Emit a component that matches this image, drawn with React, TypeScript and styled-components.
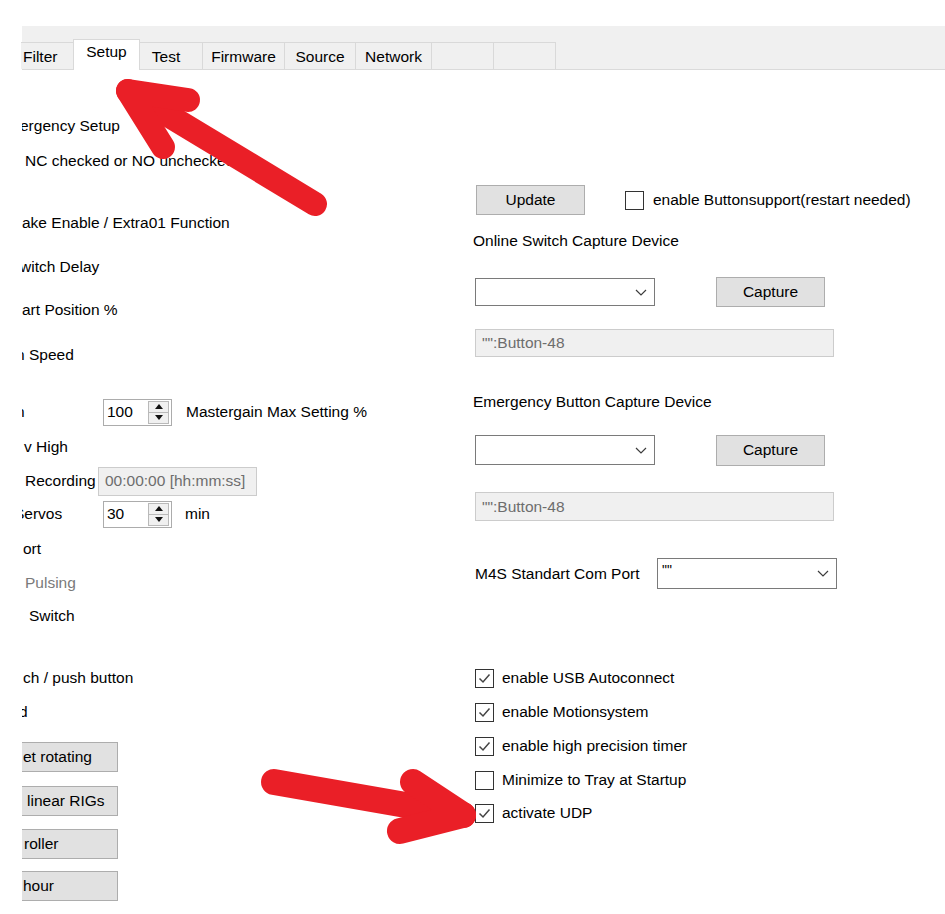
import styled, { createGlobalStyle } from 'styled-components';

const GlobalStyle = createGlobalStyle`
  html, body {
    margin: 0;
    padding: 0;
    background: #fff;
  }
  body {
    font-family: "Liberation Sans", Arial, sans-serif;
    font-size: 15.5px;
    color: #000;
  }
`;

// frame
const Page = styled.div`
  position: relative;
  width: 945px;
  height: 914px;
  overflow: hidden;
  padding-top: 26px;
  box-sizing: border-box;
  background: #fff;
`;

const TabStrip = styled.div`
  margin-left: 22px;
  height: 44px;
  box-sizing: border-box;
  background: #f0f0f0;
  border-bottom: 1px solid #dadada;
  display: flex;
  align-items: flex-end;
`;

const Tab = styled.div<{ $w: number; $active?: boolean; $first?: boolean; $dx?: number }>`
  width: ${(p) => p.$w}px;
  height: ${(p) => (p.$active ? 31 : 27)}px;
  margin-bottom: ${(p) => (p.$active ? -1 : 0)}px;
  box-sizing: border-box;
  border: 1px solid #d9d9d9;
  border-bottom: none;
  border-left: ${(p) => (p.$first ? 'none' : '1px solid #d9d9d9')};
  margin-left: -1px;
  background: ${(p) => (p.$active ? '#fff' : '#f0f0f0')};
  display: flex;
  align-items: center;
  justify-content: ${(p) => (p.$first ? 'flex-start' : 'center')};
  padding: ${(p) => (p.$active ? '0 0 6px' : '2px 0 0')};
  padding-left: ${(p) => (p.$first ? 2 : 0)}px;
  padding-right: ${(p) => p.$dx ?? 0}px;
  position: relative;
  z-index: ${(p) => (p.$active ? 1 : 0)};
`;

const Body = styled.div`
  display: grid;
  grid-template-columns: 451px 1fr;
  margin-left: 22px;
`;

const Column = styled.div<{ $clip?: boolean }>`
  display: flex;
  flex-direction: column;
  overflow: ${(p) => (p.$clip ? 'hidden' : 'visible')};
`;

const Row = styled.div<{ $mt: number; $h?: number }>`
  display: flex;
  align-items: center;
  margin-top: ${(p) => p.$mt}px;
  height: ${(p) => p.$h ?? 30}px;
  white-space: nowrap;
`;

const Label = styled.span<{ $ml?: number; $w?: number; $disabled?: boolean }>`
  margin-left: ${(p) => p.$ml ?? 0}px;
  ${(p) => (p.$w ? `width: ${p.$w}px; flex: none;` : '')}
  color: ${(p) => (p.$disabled ? '#7a7a7a' : '#000')};
  white-space: nowrap;
`;

// controls
const Button = styled.div<{ $w: number; $h?: number; $ml?: number }>`
  width: ${(p) => p.$w}px;
  height: ${(p) => p.$h ?? 30}px;
  margin-left: ${(p) => p.$ml ?? 0}px;
  box-sizing: border-box;
  background: #e1e1e1;
  border: 1px solid #adadad;
  display: flex;
  align-items: center;
  justify-content: center;
  flex: none;
`;

const CutButton = styled.div<{ $pad: number }>`
  width: 96px;
  height: 30px;
  box-sizing: border-box;
  background: #e1e1e1;
  border: 1px solid #adadad;
  border-left: none;
  display: flex;
  align-items: center;
  padding-left: ${(p) => p.$pad}px;
  white-space: nowrap;
  overflow: hidden;
`;

const TextBox = styled.div<{ $w: number; $h?: number; $ml?: number }>`
  width: ${(p) => p.$w}px;
  height: ${(p) => p.$h ?? 28}px;
  margin-left: ${(p) => p.$ml ?? 0}px;
  box-sizing: border-box;
  background: #f0f0f0;
  border: 1px solid #cccccc;
  color: #6d6d6d;
  display: flex;
  align-items: center;
  padding-left: 6px;
  flex: none;
`;

const Combo = styled.div<{ $h?: number; $ml?: number }>`
  width: 180px;
  height: ${(p) => p.$h ?? 28}px;
  margin-left: ${(p) => p.$ml ?? 0}px;
  box-sizing: border-box;
  background: #fff;
  border: 1px solid #7a7a7a;
  display: flex;
  align-items: center;
  justify-content: space-between;
  padding: 0 7px 0 4px;
  flex: none;
`;

const ComboText = styled.span`
  align-self: flex-start;
  margin-top: 3px;
  font-size: 14px;
`;

const Spinner = styled.div`
  width: 69px;
  height: 27px;
  box-sizing: border-box;
  border: 1px solid #acacac;
  background: #fff;
  display: flex;
  align-items: center;
  justify-content: space-between;
  padding: 0 2px 0 3px;
  flex: none;
`;

const SpinButtons = styled.div`
  width: 21px;
  height: 23px;
  box-sizing: border-box;
  border: 1px solid #b9b9b9;
  background: #f0f0f0;
  display: flex;
  flex-direction: column;
`;

const SpinHalf = styled.div<{ $top?: boolean }>`
  flex: 1;
  display: flex;
  align-items: center;
  justify-content: center;
  border-bottom: ${(p) => (p.$top ? '1px solid #b9b9b9' : 'none')};
`;

const CheckBox = styled.span<{ $ml?: number }>`
  width: 19px;
  height: 19px;
  margin-left: ${(p) => p.$ml ?? 0}px;
  box-sizing: border-box;
  border: 1px solid #333;
  background: #fff;
  display: flex;
  align-items: center;
  justify-content: center;
  flex: none;
`;

const Overlay = styled.svg`
  position: absolute;
  left: 0;
  top: 0;
  pointer-events: none;
`;

function Chevron() {
  return (
    <svg width="12" height="7" viewBox="0 0 12 7">
      <path d="M1 1 L6 6 L11 1" fill="none" stroke="#3c3c3c" strokeWidth="1.2" />
    </svg>
  );
}

function Check({ checked }: { checked?: boolean }) {
  return (
    <CheckBox>
      {checked && (
        <svg width="13" height="11" viewBox="0 0 13 11">
          <path d="M1.5 5.5 L5 9 L11.5 1.5" fill="none" stroke="#444" strokeWidth="1.5" />
        </svg>
      )}
    </CheckBox>
  );
}

function NumUpDown({ value }: { value: string }) {
  return (
    <Spinner>
      <span>{value}</span>
      <SpinButtons>
        <SpinHalf $top>
          <svg width="8" height="5" viewBox="0 0 8 5">
            <path d="M0 5 L4 0 L8 5 Z" fill="#111" />
          </svg>
        </SpinHalf>
        <SpinHalf>
          <svg width="8" height="5" viewBox="0 0 8 5">
            <path d="M0 0 L8 0 L4 5 Z" fill="#111" />
          </svg>
        </SpinHalf>
      </SpinButtons>
    </Spinner>
  );
}

const tabs = [
  { name: 'Filter', w: 53, dx: 0 },
  { name: 'Setup', w: 67, dx: 0 },
  { name: 'Test', w: 64, dx: 10 },
  { name: 'Firmware', w: 83, dx: 0 },
  { name: 'Source', w: 72, dx: 0 },
  { name: 'Network', w: 77, dx: 0 },
  { name: '', w: 63, dx: 0 },
  { name: '', w: 63, dx: 0 },
];

const options = [
  { text: 'enable USB Autoconnect', checked: true, mt: 77 },
  { text: 'enable Motionsystem', checked: true, mt: 10 },
  { text: 'enable high precision timer', checked: true, mt: 10 },
  { text: 'Minimize to Tray at Startup', checked: false, mt: 10 },
  { text: 'activate UDP', checked: true, mt: 9 },
];

function App() {
  return (
    <Page>
      <GlobalStyle />
      <TabStrip>
        {tabs.map((t, i) => (
          <Tab key={i} $w={t.w} $dx={t.dx} $first={i === 0} $active={t.name === 'Setup'}>
            {t.name}
          </Tab>
        ))}
      </TabStrip>

      <Body>
        <Column $clip>
          <Row $mt={41}>
            <Label $ml={-2}>ergency Setup</Label>
          </Row>
          <Row $mt={5}>
            <Label $ml={3}>NC checked or NO unchecked</Label>
          </Row>
          <Row $mt={32}>
            <Label $ml={0}>ake Enable / Extra01 Function</Label>
          </Row>
          <Row $mt={14}>
            <Label $ml={-2}>witch Delay</Label>
          </Row>
          <Row $mt={13}>
            <Label $ml={0}>art Position %</Label>
          </Row>
          <Row $mt={15}>
            <Label $ml={-6}>n Speed</Label>
          </Row>
          <Row $mt={27}>
            <Label $ml={-6} $w={87}>n</Label>
            <NumUpDown value="100" />
            <Label $ml={14}>Mastergain Max Setting %</Label>
          </Row>
          <Row $mt={5}>
            <Label $ml={2}>v High</Label>
          </Row>
          <Row $mt={4}>
            <Label $ml={3} $w={73}>Recording</Label>
            <TextBox $w={159} $h={29}>00:00:00 [hh:mm:ss]</TextBox>
          </Row>
          <Row $mt={3}>
            <Label $ml={-8} $w={89}>Servos</Label>
            <NumUpDown value="30" />
            <Label $ml={13}>min</Label>
          </Row>
          <Row $mt={5}>
            <Label $ml={1}>ort</Label>
          </Row>
          <Row $mt={4}>
            <Label $ml={3} $disabled>Pulsing</Label>
          </Row>
          <Row $mt={3}>
            <Label $ml={7}>Switch</Label>
          </Row>
          <Row $mt={32}>
            <Label $ml={1}>ch / push button</Label>
          </Row>
          <Row $mt={4}>
            <Label $ml={-3}>d</Label>
          </Row>
          <Row $mt={15}>
            <CutButton $pad={1}>et rotating</CutButton>
          </Row>
          <Row $mt={14}>
            <CutButton $pad={5}>linear RIGs</CutButton>
          </Row>
          <Row $mt={13}>
            <CutButton $pad={2}>roller</CutButton>
          </Row>
          <Row $mt={12}>
            <CutButton $pad={1}>hour</CutButton>
          </Row>
        </Column>

        <Column>
          <Row $mt={115}>
            <Button $w={109} $ml={3}>Update</Button>
            <CheckBox $ml={40} />
            <Label $ml={9}>enable Buttonsupport(restart needed)</Label>
          </Row>
          <Row $mt={16} $h={20}>
            <Label>Online Switch Capture Device</Label>
          </Row>
          <Row $mt={26}>
            <Combo $ml={2}>
              <span />
              <Chevron />
            </Combo>
            <Button $w={109} $ml={61}>Capture</Button>
          </Row>
          <Row $mt={22} $h={28}>
            <TextBox $w={359} $ml={2}>"":Button-48</TextBox>
          </Row>
          <Row $mt={35} $h={20}>
            <Label>Emergency Button Capture Device</Label>
          </Row>
          <Row $mt={22} $h={32}>
            <Combo $ml={2} $h={30}>
              <span />
              <Chevron />
            </Combo>
            <Button $w={109} $h={31} $ml={61}>Capture</Button>
          </Row>
          <Row $mt={26} $h={29}>
            <TextBox $w={359} $h={29} $ml={2}>"":Button-48</TextBox>
          </Row>
          <Row $mt={37} $h={31}>
            <Label $ml={2} $w={182}>M4S Standart Com Port</Label>
            <Combo $h={31}>
              <ComboText>""</ComboText>
              <Chevron />
            </Combo>
          </Row>
          {options.map((o) => (
            <Row key={o.text} $mt={o.mt} $h={24}>
              <Label $ml={2} />
              <Check checked={o.checked} />
              <Label $ml={8}>{o.text}</Label>
            </Row>
          ))}
        </Column>
      </Body>

      <Overlay width="945" height="914" viewBox="0 0 945 914">
        <g fill="none" stroke="#ea1f27" strokeLinecap="round" strokeLinejoin="round">
          <g strokeWidth="24">
            <path d="M315 204 L128 91" />
            <path d="M188 100 L128 91 L163 147" />
          </g>
          <g strokeWidth="26">
            <path d="M274 782 L463 815" />
            <path d="M413 782 L463 815 L400 831" />
          </g>
        </g>
      </Overlay>
    </Page>
  );
}

export default App;
